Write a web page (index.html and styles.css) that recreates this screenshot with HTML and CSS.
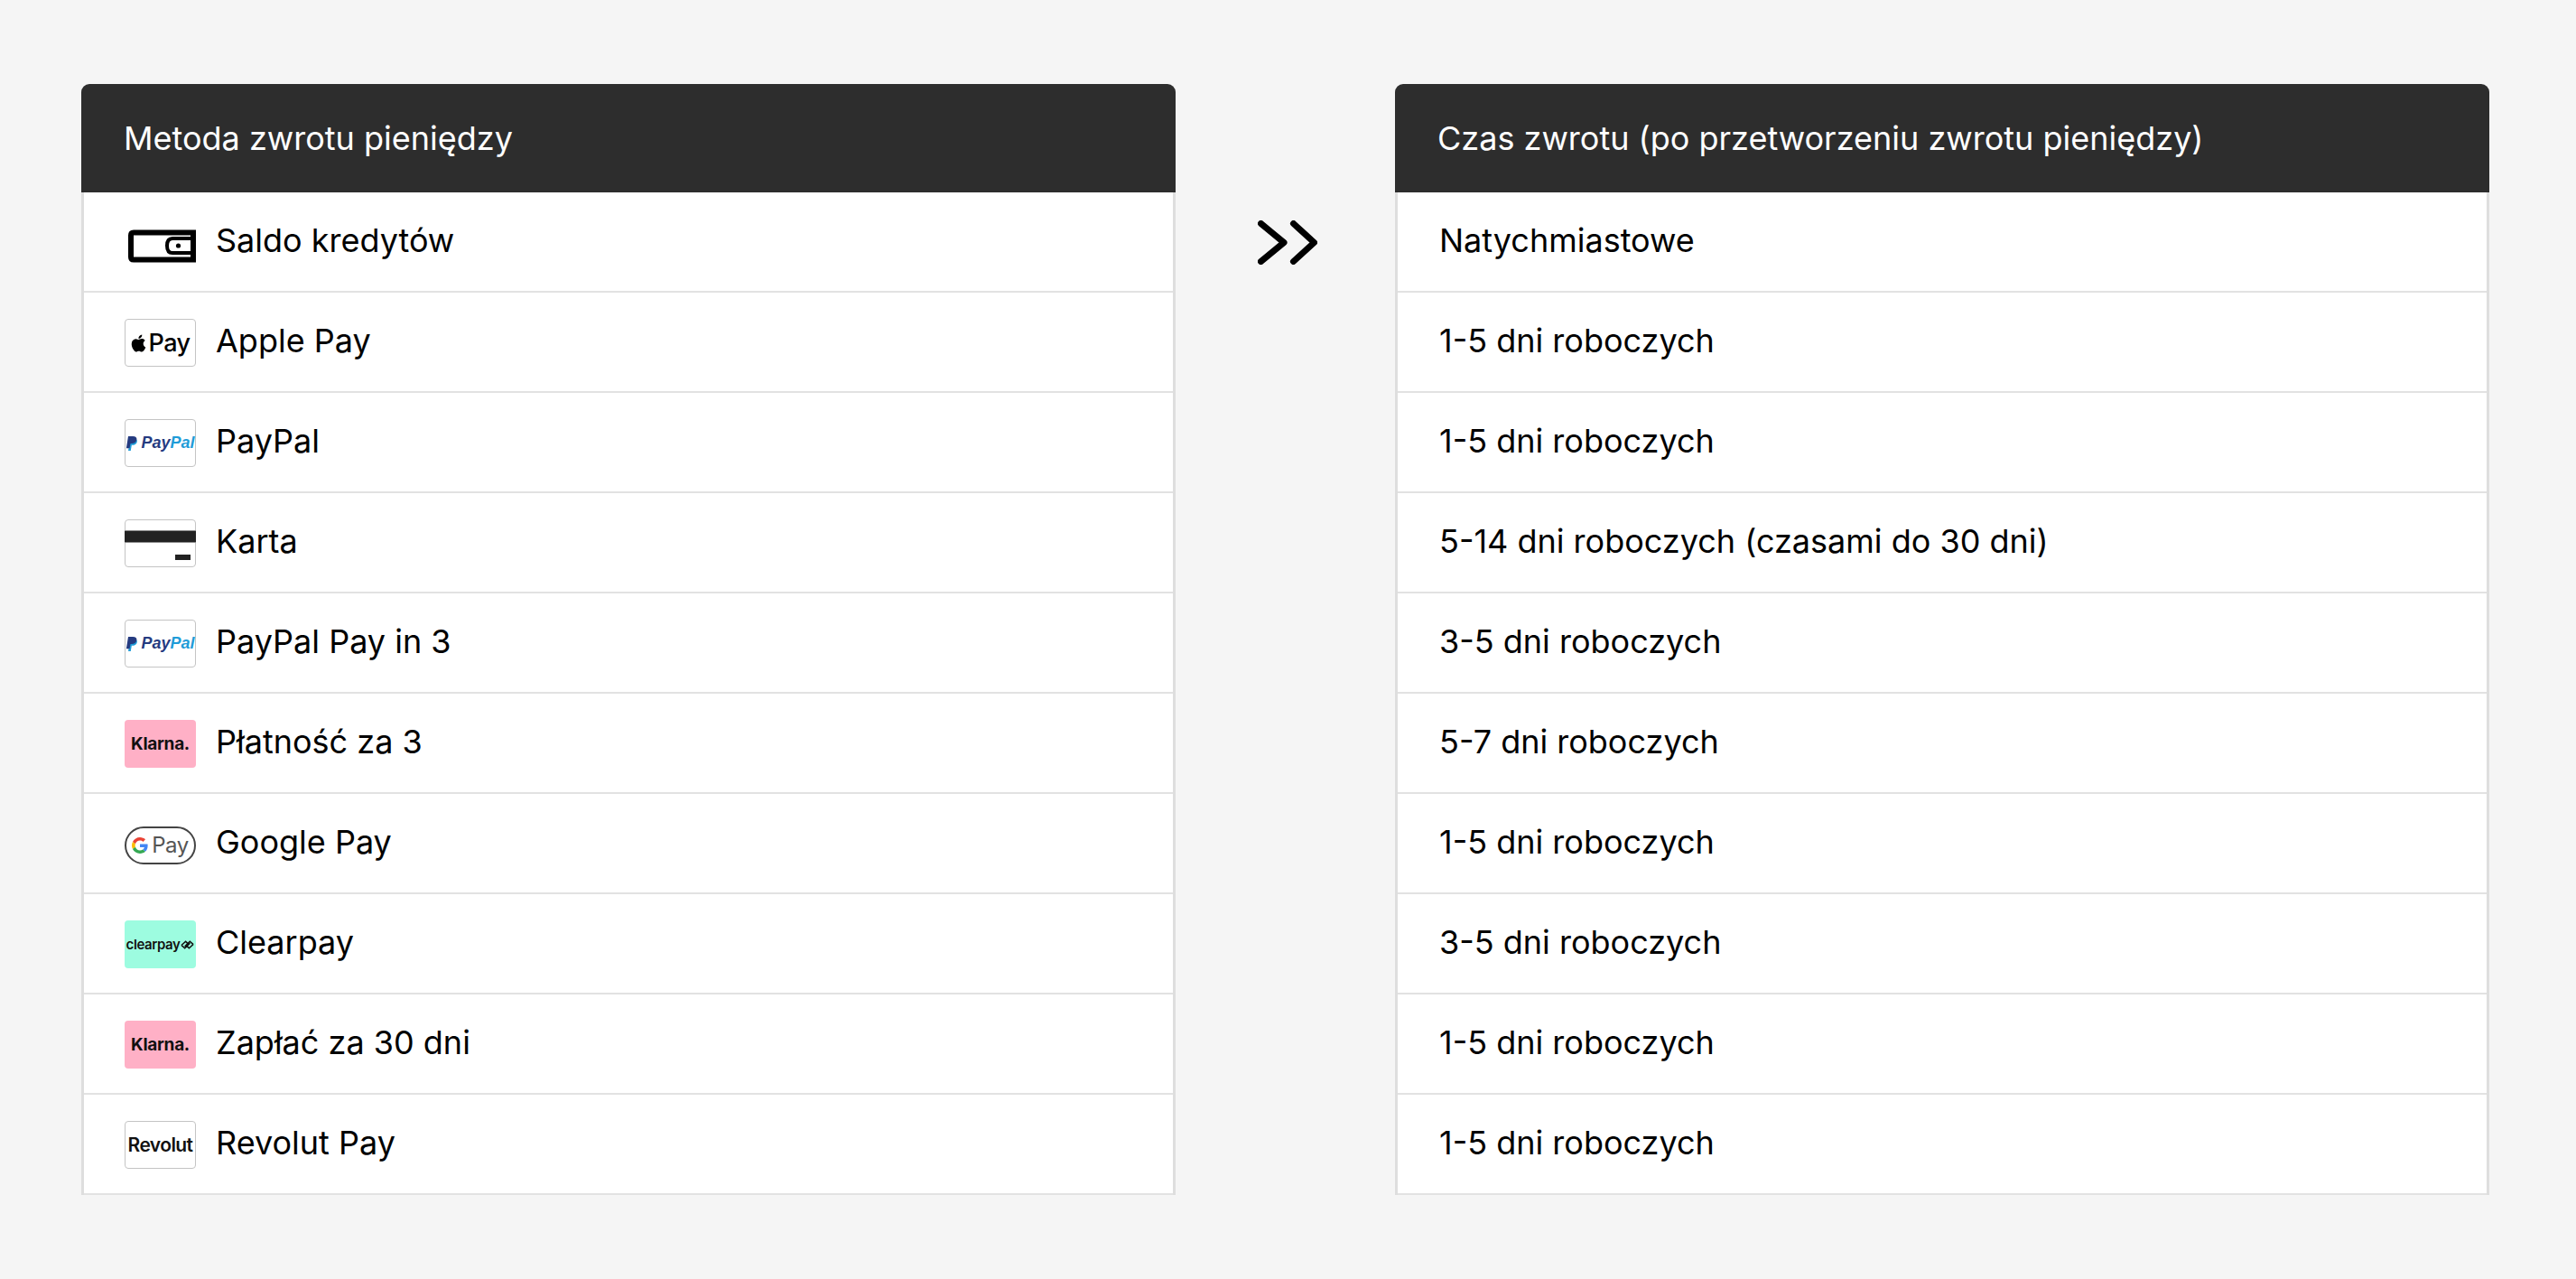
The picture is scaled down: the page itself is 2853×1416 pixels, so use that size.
FILE: index.html
```html
<!DOCTYPE html>
<html lang="pl">
<head>
<meta charset="utf-8">
<title>Czas zwrotu</title>
<link rel="stylesheet" href="styles.css">
</head>
<body>
<main class="layout">
  <section class="panel">
    <h2 class="panel-head">Metoda zwrotu pieniędzy</h2>
    <ul class="rows">
      <li class="row">
        <svg class="logo" viewBox="0 0 79 53"><path class="wallet" d="M7 18.5q0-3 3-3h66v30H10q-3 0-3-3z"/><path class="wallet-tab" d="M74 22H53q-6 0-6 8t6 8h21"/><circle cx="59.5" cy="30" r="2.6"/></svg>
        <span class="label">Saldo kredytów</span>
      </li>
      <li class="row">
        <span class="logo boxed apple"><svg class="apple-mark" viewBox="0 0 24 24"><path d="M12.152 6.896c-.948 0-2.415-1.078-3.96-1.04-2.04.027-3.91 1.183-4.961 3.014-2.117 3.675-.546 9.103 1.519 12.09 1.013 1.454 2.208 3.09 3.792 3.039 1.52-.065 2.09-.987 3.935-.987 1.831 0 2.35.987 3.96.948 1.637-.026 2.676-1.48 3.676-2.948 1.156-1.688 1.636-3.325 1.662-3.415-.039-.013-3.182-1.221-3.22-4.857-.026-3.04 2.48-4.494 2.597-4.559-1.429-2.09-3.623-2.324-4.39-2.376-2-.156-3.675 1.09-4.61 1.09zM15.53 3.83c.843-1.012 1.4-2.427 1.245-3.83-1.207.052-2.662.805-3.532 1.818-.78.896-1.454 2.338-1.273 3.714 1.338.104 2.715-.688 3.559-1.701"/></svg><span class="apple-text">Pay</span></span>
        <span class="label">Apple Pay</span>
      </li>
      <li class="row">
        <span class="logo boxed paypal"><svg class="pp-mark" viewBox="0 0 16 19"><path fill="#1f9cd8" d="M13.5 5.2c.9 3.4-1.4 6.2-5 6.2H7.3l-.9 5.1-.2 1.5H3.2l1.6-9 7-4.5z"/><path fill="#253b80" d="M3.2 1h5.6c3 0 4.9 1.4 4.4 4-.6 3.100-2.900 4.600-5.900 4.600H5.900L4.800 15.200H.9z"/></svg><span class="pp-pay">Pay</span><span class="pp-pal">Pal</span></span>
        <span class="label">PayPal</span>
      </li>
      <li class="row">
        <span class="logo boxed card"><span class="card-stripe"></span><span class="card-code"></span></span>
        <span class="label">Karta</span>
      </li>
      <li class="row">
        <span class="logo boxed paypal"><svg class="pp-mark" viewBox="0 0 16 19"><path fill="#1f9cd8" d="M13.5 5.2c.9 3.4-1.4 6.2-5 6.2H7.3l-.9 5.1-.2 1.5H3.2l1.6-9 7-4.5z"/><path fill="#253b80" d="M3.2 1h5.600c3 0 4.900 1.400 4.400 4-.6 3.100-2.900 4.600-5.900 4.600H5.900L4.800 15.200H.9z"/></svg><span class="pp-pay">Pay</span><span class="pp-pal">Pal</span></span>
        <span class="label">PayPal Pay in 3</span>
      </li>
      <li class="row">
        <span class="logo klarna">Klarna.</span>
        <span class="label">Płatność za 3</span>
      </li>
      <li class="row">
        <span class="logo gpay"><svg class="g-mark" viewBox="0 0 48 48"><path fill="#EA4335" d="M24 9.500c3.540 0 6.710 1.220 9.210 3.600l6.850-6.850C35.900 2.380 30.470 0 24 0 14.620 0 6.510 5.380 2.560 13.220l7.980 6.190C12.430 13.720 17.740 9.500 24 9.500z"/><path fill="#4285F4" d="M46.980 24.550c0-1.570-.15-3.090-.38-4.550H24v9.020h12.940c-.58 2.960-2.260 5.480-4.780 7.180l7.730 6c4.510-4.180 7.090-10.360 7.090-17.650z"/><path fill="#FBBC05" d="M10.530 28.590c-.48-1.450-.76-2.990-.76-4.590s.27-3.140.76-4.590l-7.980-6.190C.92 16.460 0 20.120 0 24c0 3.880.92 7.540 2.560 10.780l7.970-6.190z"/><path fill="#34A853" d="M24 48c6.480 0 11.930-2.130 15.890-5.810l-7.730-6c-2.150 1.450-4.920 2.300-8.160 2.300-6.260 0-11.570-4.220-13.470-9.910l-7.980 6.190C6.510 42.620 14.620 48 24 48z"/></svg><span class="g-text">Pay</span></span>
        <span class="label">Google Pay</span>
      </li>
      <li class="row">
        <span class="logo clearpay"><span class="cp-text">clearpay</span><svg class="cp-mark" viewBox="0 0 16 14"><path d="M1 7.500l5-4.500 2.500 2.500M15 6.500l-5 4.500-2.500-2.500M5 9l6-6 4 3.500M11 5l-6 6-4-3.500"/></svg></span>
        <span class="label">Clearpay</span>
      </li>
      <li class="row">
        <span class="logo klarna">Klarna.</span>
        <span class="label">Zapłać za 30 dni</span>
      </li>
      <li class="row">
        <span class="logo boxed revolut">Revolut</span>
        <span class="label">Revolut Pay</span>
      </li>
    </ul>
  </section>

  <div class="gutter">
    <svg class="chevrons" viewBox="0 0 66 49"><path d="M3.500 3.500L29 24.500 3.500 45.500M39.500 3.500L62.500 24.500 39.500 45.500"/></svg>
  </div>

  <section class="panel">
    <h2 class="panel-head">Czas zwrotu (po przetworzeniu zwrotu pieniędzy)</h2>
    <ul class="rows">
      <li class="row"><span class="time">Natychmiastowe</span></li>
      <li class="row"><span class="time">1-5 dni roboczych</span></li>
      <li class="row"><span class="time">1-5 dni roboczych</span></li>
      <li class="row"><span class="time">5-14 dni roboczych (czasami do 30 dni)</span></li>
      <li class="row"><span class="time">3-5 dni roboczych</span></li>
      <li class="row"><span class="time">5-7 dni roboczych</span></li>
      <li class="row"><span class="time">1-5 dni roboczych</span></li>
      <li class="row"><span class="time">3-5 dni roboczych</span></li>
      <li class="row"><span class="time">1-5 dni roboczych</span></li>
      <li class="row"><span class="time">1-5 dni roboczych</span></li>
    </ul>
  </section>
</main>
</body>
</html>
```

FILE: styles.css
```css
* { box-sizing: border-box; }

html, body { margin: 0; height: 100%; }

body {
  background: #f5f5f5;
  color: #000;
  font-family: Inter, "Liberation Sans", sans-serif;
}

.layout {
  display: grid;
  grid-template-columns: 1212px 243px 1212px;
  padding: 93px 0 0 90px;
}

.panel { display: flex; flex-direction: column; }

.panel-head {
  margin: 0;
  height: 120px;
  padding: 0 47px;
  display: flex;
  align-items: center;
  background: #2d2d2d;
  border-radius: 9px 9px 0 0;
  color: #fff;
  font-size: 36px;
  font-weight: 400;
}

.rows {
  margin: 0;
  padding: 0;
  list-style: none;
  background: #fff;
  border-left: 3px solid #dedede;
  border-right: 3px solid #dedede;
}

.row {
  height: 111px;
  padding: 2px 45px 0;
  display: flex;
  align-items: center;
  gap: 22px;
  border-bottom: 2px solid #e2e2e2;
  font-size: 36px;
}

.label, .time { margin-top: -6px; }

.time { margin-left: 1px; }

.logo {
  flex: none;
  width: 79px;
  height: 53px;
  display: flex;
  align-items: center;
  justify-content: center;
  border-radius: 4px;
}

.boxed { border: 1px solid #c4c4c4; background: #fff; }

.wallet { fill: none; stroke: #000; stroke-width: 6; }
.wallet-tab { fill: none; stroke: #000; stroke-width: 4; }

.apple { gap: 1px; }
.apple-mark { width: 19px; height: 22px; }
.apple-text { font-size: 27px; font-weight: 500; letter-spacing: -0.5px; }

.paypal {
  font-family: "Liberation Sans", sans-serif;
  font-size: 18px;
  font-weight: 700;
  font-style: italic;
}
.pp-mark { width: 15px; height: 18px; margin-right: 2px; }
.pp-pay { color: #253b80; }
.pp-pal { color: #1f9cd8; }

.card { position: relative; display: block; }
.card-stripe { display: block; height: 14px; margin: 11px -1px 0; background: #222; border-top: 1px solid #8c8c8c; border-bottom: 1px solid #8c8c8c; }
.card-code { position: absolute; right: 5px; bottom: 7px; width: 17px; height: 6px; background: #222; }

.klarna {
  background: #ffb0c6;
  color: #111;
  font-size: 19px;
  font-weight: 700;
  letter-spacing: -0.3px;
}

.gpay {
  height: 42px;
  margin-top: 2px;
  gap: 4px;
  border: 2px solid #444;
  border-radius: 21px;
}
.g-mark { width: 18px; height: 18px; }
.g-text { color: #555; font-size: 24px; letter-spacing: -0.5px; }

.clearpay {
  gap: 1px;
  background: #9dfce0;
  color: #111;
}
.cp-text { font-size: 15px; font-weight: 600; letter-spacing: -0.4px; }
.cp-mark { width: 15px; height: 14px; fill: none; stroke: #111; stroke-width: 1.700; }

.revolut {
  font-size: 21px;
  font-weight: 600;
  letter-spacing: -0.6px;
  color: #111;
}

.gutter { display: flex; justify-content: center; padding: 151px 0 0 5px; }

.chevrons { width: 66px; height: 49px; fill: none; stroke: #000; stroke-width: 7; stroke-linecap: round; stroke-linejoin: round; }
```
